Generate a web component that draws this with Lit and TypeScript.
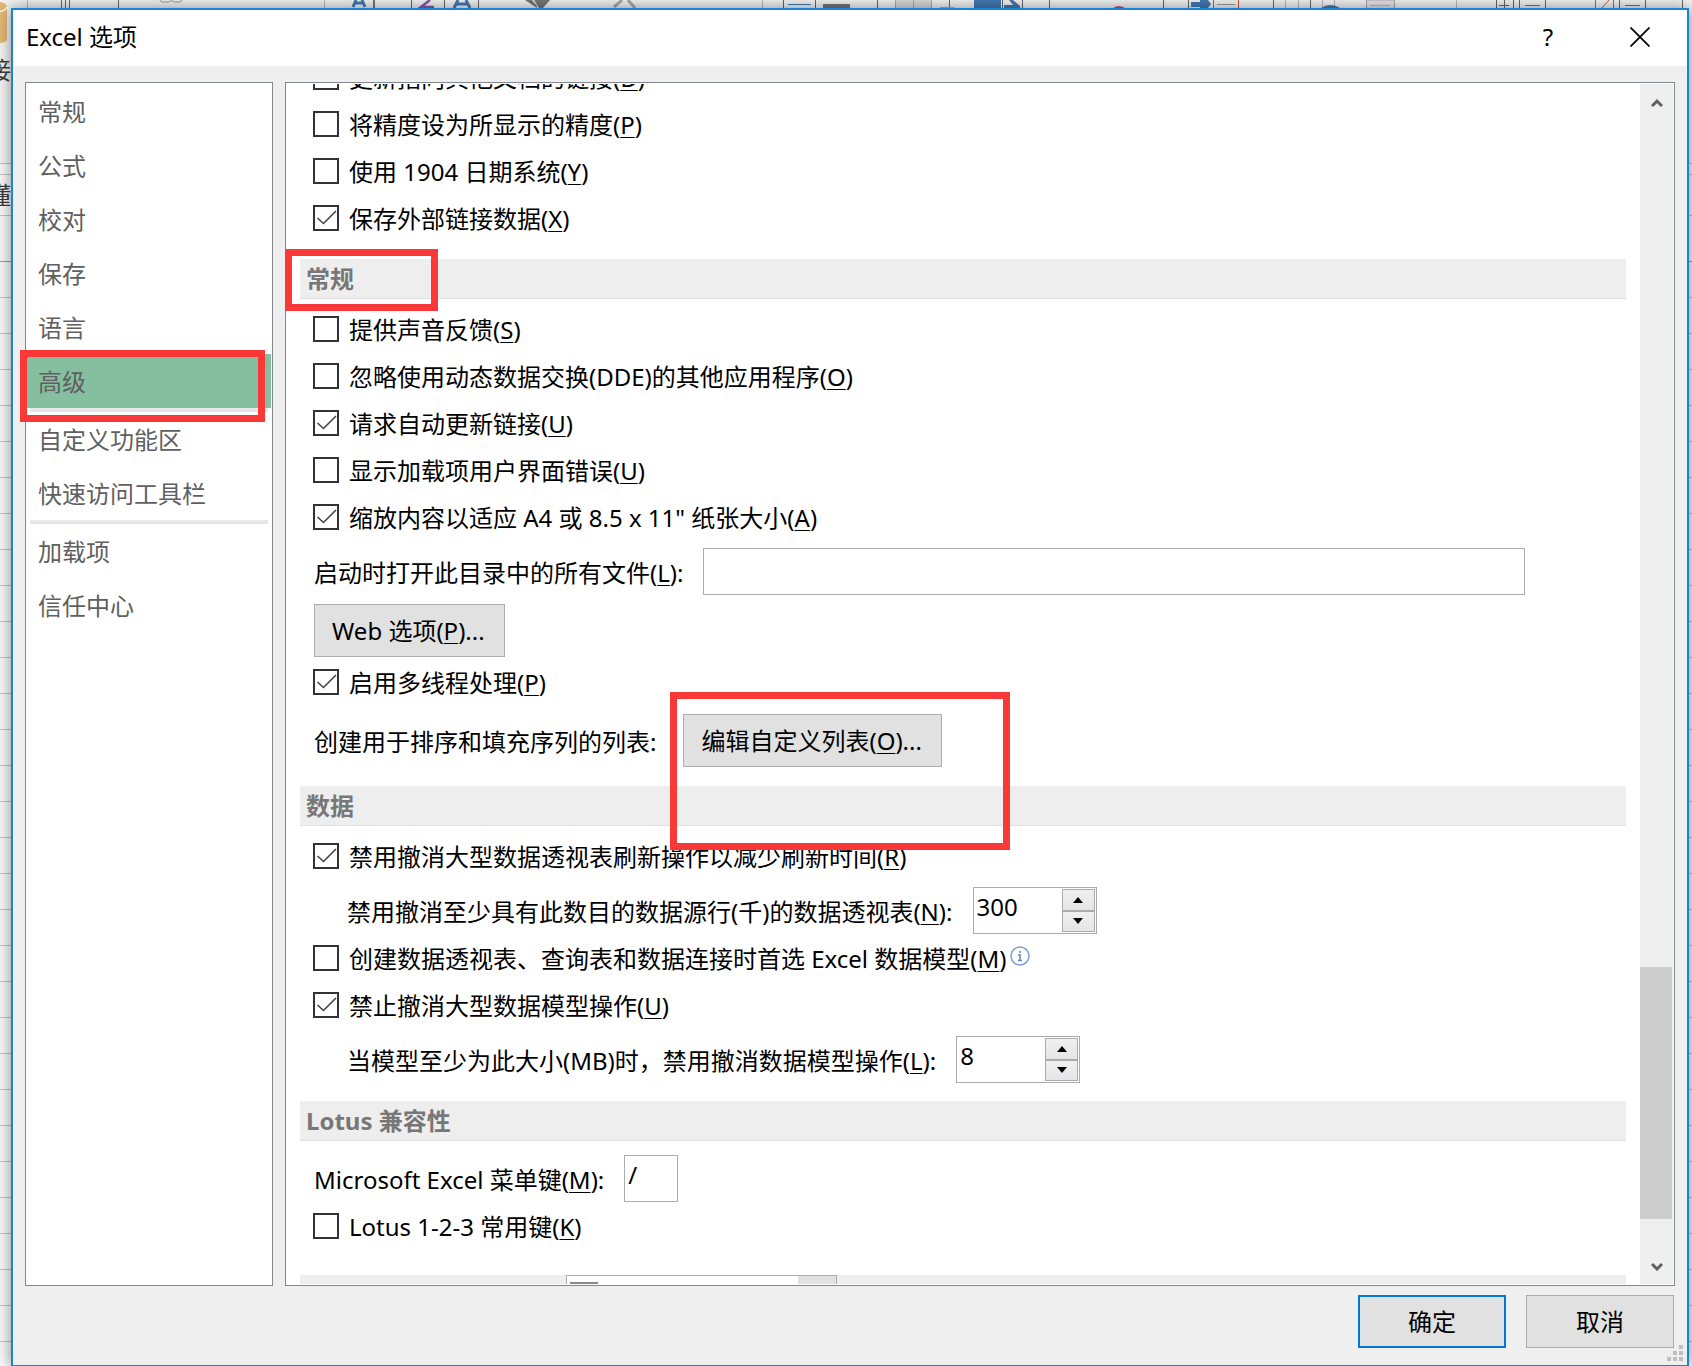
import { LitElement, html, css, svg, nothing, TemplateResult } from "lit";
import { customElement, state } from "lit/decorators.js";
import { classMap } from "lit/directives/class-map.js";

const NAV_GROUPS: string[][] = [
  ["常规", "公式", "校对", "保存", "语言", "高级"],
  ["自定义功能区", "快速访问工具栏"],
  ["加载项", "信任中心"],
];

const GRID_LINES = [163, 174, 215, 261, ...Array.from({ length: 30 }, (_, i) => 297 + i * 36)];

/** Splits "text(K)rest" so that the access key K can be underlined. */
const keyed = (text: string, key: string, rest = ""): TemplateResult =>
  html`${text}(<u>${key}</u>)${rest}`;

@customElement("app-root")
export class AppRoot extends LitElement {
  @state() private page = "高级";
  @state() private rows = 300;
  @state() private size = 8;

  static styles = css`
    :host {
      display: block;
      font-family: "Noto Sans", "Noto Sans CJK SC", sans-serif;
      font-size: 24px;
      line-height: 32px;
      color: #000;
    }
    * {
      box-sizing: border-box;
    }
    button,
    input,
    select {
      font: inherit;
      color: inherit;
      margin: 0;
      border-radius: 0;
      outline-offset: -4px;
    }
    u {
      text-decoration-thickness: 1px;
      text-underline-offset: 3px;
    }
    .desktop {
      position: relative;
      display: flex;
      height: 100vh;
      padding: 8px 3px 0 11px;
      background: #f8f8f8;
      overflow: hidden;
    }
    .backdrop {
      position: absolute;
      inset: 0;
      color: #3c3c3c;
    }
    .backdrop svg {
      position: absolute;
      top: 0;
      left: 0;
    }
    .sheet-text {
      position: absolute;
      left: -13px;
    }
    .sheet-text.first {
      top: 54px;
    }
    .sheet-text.second {
      top: 179px;
    }
    .dialog {
      position: relative;
      flex: 1;
      min-width: 0;
      display: flex;
      flex-direction: column;
      background: #efefef;
      border: 2px solid #1883d7;
      border-bottom-width: 1px;
      box-shadow: 0 0 14px rgba(0, 0, 0, 0.45);
    }
    .titlebar {
      display: flex;
      align-items: center;
      height: 56px;
      padding: 0 1px 2px 13px;
      background: #fff;
    }
    .titlebar h1 {
      flex: 1;
      margin: 0;
      font-size: 24px;
      font-weight: 400;
    }
    .caption-button {
      display: grid;
      place-items: center;
      width: 92px;
      height: 54px;
      padding: 0;
      border: 0;
      background: none;
    }
    .body {
      flex: 1;
      min-height: 0;
      display: grid;
      grid-template-columns: 248px minmax(0, 1fr);
      gap: 12px;
      padding: 16px 12px 0;
    }
    .nav,
    .panel {
      background: #fff;
      border: 1px solid #828790;
      padding: 1px;
      min-height: 0;
    }
    .nav-group + .nav-group {
      border-top: 4px solid transparent;
      background: linear-gradient(#ebebeb, #e2e2e2) 3px 0 / calc(100% - 6px) 4px no-repeat border-box;
    }
    .nav-item {
      display: block;
      width: 100%;
      height: 54px;
      padding: 1px 0 0 11px;
      border: 0;
      background: none;
      color: #5f5f5f;
      text-align: left;
    }
    .nav-item.active {
      background: #86bf9f;
    }
    .panel {
      display: flex;
    }
    .viewport {
      flex: 1;
      min-width: 0;
      overflow: hidden;
      padding: 0 14px 0 13px;
    }
    .scrolled {
      margin-top: -30px;
    }
    .section-head {
      height: 40px;
      margin: 0;
      padding: 0 6px;
      border-bottom: 1px solid #e0e0e0;
      background: #eee;
      color: #777;
      font-size: 24px;
      font-weight: 700;
      line-height: 40px;
    }
    .options {
      padding: 7px 0 17px 13px;
    }
    .options.leading {
      padding-top: 0;
    }
    .check {
      display: flex;
      align-items: center;
      gap: 10px;
      height: 47px;
      padding-bottom: 1px;
    }
    .check > span:nth-child(2),
    .field label {
      padding-top: 2px;
    }
    .box {
      display: grid;
    }
    .box > * {
      grid-area: 1 / 1;
    }
    .box input {
      appearance: none;
      width: 26px;
      height: 26px;
      border: 2px solid #333;
      background: #fff;
    }
    .box svg {
      visibility: hidden;
      pointer-events: none;
    }
    .box input:checked + svg {
      visibility: visible;
    }
    .field {
      display: flex;
      align-items: center;
      gap: 20px;
      margin: 7px 0 1px 1px;
      height: 47px;
    }
    .field.indented {
      padding-left: 33px;
    }
    .field.wide {
      padding-right: 101px;
      margin-bottom: 9px;
    }
    .field.tall {
      height: 53px;
      gap: 27px;
      margin: 8px 0 2px 1px;
    }
    .text {
      height: 47px;
      min-width: 0;
      padding: 0 4px 8px 3px;
      border: 1px solid #ababb2;
      background: #fff;
    }
    .field.wide .text {
      flex: 1;
    }
    .text.key {
      width: 54px;
    }
    .push {
      display: block;
      height: 53px;
      padding: 1px 19px 0 17px;
      border: 1px solid #adadad;
      background: #e1e1e1;
      white-space: nowrap;
    }
    .options > .push {
      margin: 0 0 2px 1px;
    }
    .spinner {
      display: flex;
      width: 124px;
      height: 47px;
      padding: 1px;
      border: 1px solid #ababb2;
    }
    .spinner input {
      appearance: textfield;
      flex: 1;
      min-width: 0;
      padding: 0 0 8px 2px;
      border: 0;
      background: #fff;
    }
    .spinner input::-webkit-inner-spin-button {
      appearance: none;
      margin: 0;
    }
    .steps {
      display: grid;
      grid-template-rows: 1fr 1fr;
      width: 33px;
    }
    .steps button {
      display: grid;
      place-items: center;
      min-height: 0;
      padding: 0;
      border: 1px solid #ababab;
      background: linear-gradient(#f0f0f0, #e5e5e5);
    }
    .info {
      margin: 0 0 4px -6px;
    }
    .lotus {
      padding-bottom: 25px;
    }
    .combo-head {
      display: flex;
      padding: 0 0 0 266px;
      border: 0;
    }
    .combo {
      appearance: none;
      width: 271px;
      height: 40px;
      padding: 0 8px;
      border: 1px solid #ababb2;
      background: linear-gradient(#e1e1e1, #e1e1e1) right / 38px 100% no-repeat #fff;
    }
    .combo-wrap {
      position: relative;
    }
    .combo-wrap svg {
      position: absolute;
      top: 7px;
      left: 4px;
    }
    .scrollbar {
      display: flex;
      flex-direction: column;
      width: 33px;
      background: #efefef;
    }
    .scrollbar button {
      display: grid;
      place-items: center;
      height: 36px;
      padding: 0;
      border: 0;
      background: none;
    }
    .track {
      flex: 1;
      display: grid;
      grid-template-rows: 847fr 252fr 29fr;
    }
    .thumb {
      grid-row: 2;
      margin-right: 1px;
      background: #cdcdcd;
    }
    .footer {
      display: flex;
      justify-content: flex-end;
      gap: 20px;
      padding: 9px 13px 17px;
    }
    .footer .push {
      width: 148px;
      padding: 1px 0 0;
    }
    .push.default {
      border: 2px solid #0078d7;
    }
    .grip {
      position: absolute;
      right: 4px;
      bottom: 4px;
    }
    .mark {
      position: absolute;
      border: 7px solid #fa3838;
      pointer-events: none;
    }
    .mark-nav {
      left: 20px;
      top: 350px;
      width: 245px;
      height: 72px;
    }
    .mark-section {
      left: 285px;
      top: 249px;
      width: 153px;
      height: 62px;
    }
    .mark-button {
      left: 670px;
      top: 692px;
      width: 340px;
      height: 158px;
    }
  `;

  private check(label: unknown, checked = false, extra: unknown = nothing) {
    return html`<label class="check">
      <span class="box">
        <input type="checkbox" .checked=${checked} />
        <svg width="26" height="26" viewBox="0 0 26 26" fill="none" stroke="#444" stroke-width="1.6">
          <path d="M4.5 13 10.500 18.500 23 6" />
        </svg>
      </span>
      <span>${label}</span>${extra}
    </label>`;
  }

  private spinner(id: string, value: number, set: (v: number) => void) {
    return html`<span class="spinner">
      <input
        id=${id}
        type="number"
        .value=${String(value)}
        @change=${(e: Event) => set(Number((e.target as HTMLInputElement).value))}
      />
      <span class="steps">
        <button aria-label="增加" @click=${() => set(value + 1)}>
          <svg width="10" height="6"><path d="M5 0 10 6H0Z" /></svg>
        </button>
        <button aria-label="减少" @click=${() => set(Math.max(0, value - 1))}>
          <svg width="10" height="6"><path d="M5 6 10 0H0Z" /></svg>
        </button>
      </span>
    </span>`;
  }

  private ribbon() {
    const dark = [61, 65, 69, 118, 411, 444, 478, 783, 815, 877, 949, 1002, 1022, 1049, 1163, 1188, 1273, 1310, 1496, 1513, 1519, 1545, 1619, 1645, 1682];
    const light = [27, 324, 762, 1285, 1298, 1322, 1334, 1456];
    const red = [1213, 1238, 1595, 1613];
    return svg`
      ${dark.map((x) => svg`<rect x=${x} y="0" width="1" height="8" fill="#666" />`)}
      ${light.map((x) => svg`<rect x=${x} y="0" width="1" height="8" fill="#b9b9b9" />`)}
      ${red.map((x) => svg`<rect x=${x} y="0" width="1" height="8" fill="#d8553c" />`)}
      <path d="M160 0q0 2 3 2h5q3 0 3-2M172 0q0 2 3 2h4q3 0 3-2" fill="none" stroke="#999" />
      <path d="M353 7 356 0M365 7 362 0M355 3h7M454 8 458 0M470 8 466 0M457 4h10" fill="none" stroke="#4679b2" stroke-width="3" />
      <rect x="373" y="0" width="2" height="8" fill="#777" />
      <path d="M430 0 421 7h13" fill="none" stroke="#8a55ad" stroke-width="2.5" />
      <path d="M525 0h7l5 6v2ZM534 0h16l-7 8h-4Z" fill="#777" />
      <path d="M614 7 622 0M628 0 635 8" fill="none" stroke="#a9a9a9" stroke-width="3" />
      <path d="M788 4.500h23M1525 5.500h15M1625 5.500h15" stroke="#4679b2" />
      <rect x="823" y="4" width="27" height="4" fill="#777" />
      <rect x="895" y="0" width="37" height="8" fill="#d9d9d9" />
      <path d="M895.500 0v8M913.500 0v8M931.500 0v8" stroke="#aaa" />
      <rect x="940" y="7" width="14" height="1" fill="#d6a878" />
      <rect x="974" y="0" width="27" height="8" fill="#4679b2" />
      <path d="M1009 0h4l7 6v2h-16V5h9Z" fill="#4679b2" />
      <path d="M1113 8q6-4 12 0Z" fill="#d8553c" />
      <path d="M1191 2h9V0h8l3 4-3 4h-8V7h-9ZM1321 8q9-6 19 0Z" fill="#4679b2" />
      <path d="M1217 4.500h18" stroke="#999" />
      <path d="M1366.500 8V0h28v8" fill="#e8e3ea" stroke="#aaa" /><path d="M1370 5.500h20" stroke="#bbb" />
      <path d="M1499 5.500h10M1504.500 0v8" stroke="#666" />
      <path d="M1602 8 1609 0" stroke="#d8553c" />`;
  }

  private backdrop() {
    return html`<div class="backdrop" aria-hidden="true">
      <svg width="100%" height="100%">
        <rect width="100%" height="163" fill="#f3f3f3" />
        ${GRID_LINES.map(
          (y) => svg`<rect x="0" y=${y} width="100%" height="1" fill=${y === 261 ? "#999" : "#c2c2c2"} />`,
        )}
        ${this.ribbon()}
        <path d="M-20 7C-14 0 7 0 7 7v32C7 45-14 45-20 39Z" fill="#e3b873" />
        <path d="M-20 8C-10 14 4 13 7 7" fill="none" stroke="#fff" stroke-width="1.500" />
      </svg>
      <span class="sheet-text first">接</span>
      <span class="sheet-text second">懂</span>
    </div>`;
  }

  render() {
    return html`<div class="desktop" lang="zh-CN">
      ${this.backdrop()}
      <main class="dialog" role="dialog" aria-labelledby="title">
        <header class="titlebar">
          <h1 id="title">Excel 选项</h1>
          <button class="caption-button" aria-label="帮助">?</button>
          <button class="caption-button" aria-label="关闭">
            <svg width="20" height="20" viewBox="0 0 20 20" stroke="#000" stroke-width="1.800">
              <path d="M0.500 0.500 19.500 19.500M19.500 0.500 0.500 19.500" />
            </svg>
          </button>
        </header>

        <div class="body">
          <nav class="nav">
            ${NAV_GROUPS.map(
              (group) => html`<div class="nav-group">
                ${group.map(
                  (name) => html`<button
                    class=${classMap({ "nav-item": true, active: name === this.page })}
                    @click=${() => (this.page = name)}
                  >${name}</button>`,
                )}
              </div>`,
            )}
          </nav>

          <section class="panel">
            <div class="viewport">
              <div class="scrolled">${this.options()}</div>
            </div>
            <div class="scrollbar">
              <button aria-label="向上滚动">
                <svg width="12" height="10" fill="none" stroke="#606060" stroke-width="3">
                  <path d="M1 9 6 4 11 9" />
                </svg>
              </button>
              <div class="track"><div class="thumb"></div></div>
              <button aria-label="向下滚动">
                <svg width="12" height="10" fill="none" stroke="#606060" stroke-width="3">
                  <path d="M1 3 6 8 11 3" />
                </svg>
              </button>
            </div>
          </section>
        </div>

        <footer class="footer">
          <button class="push default">确定</button>
          <button class="push">取消</button>
        </footer>
        <svg class="grip" width="16" height="16" fill="#bfbfbf">
          <path d="M12 0h4v4h-4ZM6 6h4v4H6ZM12 6h4v4h-4ZM0 12h4v4H0ZM6 12h4v4H6ZM12 12h4v4h-4Z" />
        </svg>
      </main>
      <div class="mark mark-nav"></div>
      <div class="mark mark-section"></div>
      <div class="mark mark-button"></div>
    </div>`;
  }

  private options() {
    return html`
      <div class="options leading">
        ${this.check(keyed("更新指向其他文档的链接", "D"))}
        ${this.check(keyed("将精度设为所显示的精度", "P"))}
        ${this.check(keyed("使用 1904 日期系统", "Y"))}
        ${this.check(keyed("保存外部链接数据", "X"), true)}
      </div>

      <h2 class="section-head">常规</h2>
      <div class="options">
        ${this.check(keyed("提供声音反馈", "S"))}
        ${this.check(keyed("忽略使用动态数据交换(DDE)的其他应用程序", "O"))}
        ${this.check(keyed("请求自动更新链接", "U"), true)}
        ${this.check(keyed("显示加载项用户界面错误", "U"))}
        ${this.check(keyed('缩放内容以适应 A4 或 8.5 x 11" 纸张大小', "A"), true)}
        <div class="field wide">
          <label for="startup">${keyed("启动时打开此目录中的所有文件", "L", ":")}</label>
          <input class="text" id="startup" type="text" />
        </div>
        <button class="push">Web ${keyed("选项", "P", "...")}</button>
        ${this.check(keyed("启用多线程处理", "P"), true)}
        <div class="field tall">
          <label for="lists">创建用于排序和填充序列的列表:</label>
          <button class="push" id="lists">${keyed("编辑自定义列表", "O", "...")}</button>
        </div>
      </div>

      <h2 class="section-head">数据</h2>
      <div class="options">
        ${this.check(keyed("禁用撤消大型数据透视表刷新操作以减少刷新时间", "R"), true)}
        <div class="field indented">
          <label for="rows">${keyed("禁用撤消至少具有此数目的数据源行(千)的数据透视表", "N", ":")}</label>
          ${this.spinner("rows", this.rows, (v) => (this.rows = v))}
        </div>
        ${this.check(
          keyed("创建数据透视表、查询表和数据连接时首选 Excel 数据模型", "M"),
          false,
          html`<svg class="info" width="20" height="20" viewBox="0 0 20 20">
            <circle cx="10" cy="10" r="9" fill="#fff" stroke="#7ba3d6" stroke-width="1.500" />
            <path d="M10 5v2M8 9h2v5M8 14.500h4" fill="none" stroke="#5b87bd" stroke-width="1.500" />
          </svg>`,
        )}
        ${this.check(keyed("禁止撤消大型数据模型操作", "U"), true)}
        <div class="field indented">
          <label for="size">${keyed("当模型至少为此大小(MB)时，禁用撤消数据模型操作", "L", ":")}</label>
          ${this.spinner("size", this.size, (v) => (this.size = v))}
        </div>
      </div>

      <h2 class="section-head">Lotus 兼容性</h2>
      <div class="options lotus">
        <div class="field">
          <label for="menukey">${keyed("Microsoft Excel 菜单键", "M", ":")}</label>
          <input class="text key" id="menukey" type="text" value="/" />
        </div>
        ${this.check(keyed("Lotus 1-2-3 常用键", "K"))}
      </div>

      <div class="section-head combo-head">
        <span class="combo-wrap">
          <select class="combo" aria-label="工作簿"></select>
          <svg width="28" height="24" fill="#888"><path d="M0 0h28v24H0Z" /></svg>
        </span>
      </div>
    `;
  }
}
